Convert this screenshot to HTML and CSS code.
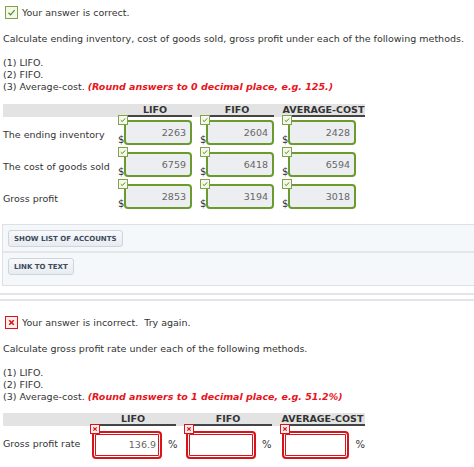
FILE: index.html
```html
<!DOCTYPE html>
<html lang="en">
<head>
    <meta charset="UTF-8">
    <title>Inventory methods</title>
    <link rel="stylesheet" href="styles.css">
</head>
<body>

    <!-- PARTE 1 -->
    <section class="question">
        <div class="result">
            <span class="mark mark-ok">
                <svg width="11" height="11" viewBox="0 0 11 11"><path d="M2.5 5.8 L4.6 7.8 L8.6 3.2" fill="none" stroke="#5c8a2a" stroke-width="1.2"/></svg>
            </span>
            Your answer is correct.
        </div>

        <p class="prompt">Calculate ending inventory, cost of goods sold, gross profit under each of the following methods.</p>

        <div class="methods">
            <div>(1) LIFO.</div>
            <div>(2) FIFO.</div>
            <div>(3) Average-cost. <em class="hint">(Round answers to 0 decimal place, e.g. 125.)</em></div>
        </div>

        <div class="grid grid-money">
            <div class="head-blank"></div>
            <div class="head">LIFO</div>
            <div class="head">FIFO</div>
            <div class="head head-last">AVERAGE-COST</div>

            <div class="label">The ending inventory</div>
            <div class="cell"><span class="tick"><svg width="8" height="8" viewBox="0 0 8 8"><path d="M1.8 4.2 L3.3 5.6 L6.2 2.4" fill="none" stroke="#5c8a2a" stroke-width="1"/></svg></span><span class="cur">$</span><span class="box ok">2263</span></div>
            <div class="cell"><span class="tick"><svg width="8" height="8" viewBox="0 0 8 8"><path d="M1.8 4.2 L3.3 5.6 L6.2 2.4" fill="none" stroke="#5c8a2a" stroke-width="1"/></svg></span><span class="cur">$</span><span class="box ok">2604</span></div>
            <div class="cell"><span class="tick"><svg width="8" height="8" viewBox="0 0 8 8"><path d="M1.8 4.2 L3.3 5.6 L6.2 2.4" fill="none" stroke="#5c8a2a" stroke-width="1"/></svg></span><span class="cur">$</span><span class="box ok">2428</span></div>

            <div class="label">The cost of goods sold</div>
            <div class="cell"><span class="tick"><svg width="8" height="8" viewBox="0 0 8 8"><path d="M1.8 4.2 L3.3 5.6 L6.2 2.4" fill="none" stroke="#5c8a2a" stroke-width="1"/></svg></span><span class="cur">$</span><span class="box ok">6759</span></div>
            <div class="cell"><span class="tick"><svg width="8" height="8" viewBox="0 0 8 8"><path d="M1.8 4.2 L3.3 5.6 L6.2 2.4" fill="none" stroke="#5c8a2a" stroke-width="1"/></svg></span><span class="cur">$</span><span class="box ok">6418</span></div>
            <div class="cell"><span class="tick"><svg width="8" height="8" viewBox="0 0 8 8"><path d="M1.8 4.2 L3.3 5.6 L6.2 2.4" fill="none" stroke="#5c8a2a" stroke-width="1"/></svg></span><span class="cur">$</span><span class="box ok">6594</span></div>

            <div class="label">Gross profit</div>
            <div class="cell"><span class="tick"><svg width="8" height="8" viewBox="0 0 8 8"><path d="M1.8 4.2 L3.3 5.6 L6.2 2.4" fill="none" stroke="#5c8a2a" stroke-width="1"/></svg></span><span class="cur">$</span><span class="box ok">2853</span></div>
            <div class="cell"><span class="tick"><svg width="8" height="8" viewBox="0 0 8 8"><path d="M1.8 4.2 L3.3 5.6 L6.2 2.4" fill="none" stroke="#5c8a2a" stroke-width="1"/></svg></span><span class="cur">$</span><span class="box ok">3194</span></div>
            <div class="cell"><span class="tick"><svg width="8" height="8" viewBox="0 0 8 8"><path d="M1.8 4.2 L3.3 5.6 L6.2 2.4" fill="none" stroke="#5c8a2a" stroke-width="1"/></svg></span><span class="cur">$</span><span class="box ok">3018</span></div>
        </div>
    </section>

    <!-- FERRAMENTAS -->
    <div class="tools">
        <div class="tools-row"><button class="tool-button">Show list of accounts</button></div>
        <div class="tools-row tools-row-last"><button class="tool-button">Link to text</button></div>
    </div>

    <div class="divider"></div>
    <div class="divider divider-2"></div>

    <!-- PARTE 2 -->
    <section class="question question-2">
        <div class="result">
            <span class="mark mark-bad">
                <svg width="11" height="11" viewBox="0 0 11 11"><path d="M3.2 3.2 L7.8 7.8 M7.8 3.2 L3.2 7.8" stroke="#d7141a" stroke-width="1.6"/></svg>
            </span>
            Your answer is incorrect.&nbsp; Try again.
        </div>

        <p class="prompt">Calculate gross profit rate under each of the following methods.</p>

        <div class="methods">
            <div>(1) LIFO.</div>
            <div>(2) FIFO.</div>
            <div>(3) Average-cost. <em class="hint">(Round answers to 1 decimal place, e.g. 51.2%)</em></div>
        </div>

        <div class="grid grid-rate">
            <div class="head-blank"></div>
            <div class="head">LIFO</div>
            <div class="head">FIFO</div>
            <div class="head head-last">AVERAGE-COST</div>

            <div class="label">Gross profit rate</div>
            <div class="cell"><span class="cross"><svg width="8" height="8" viewBox="0 0 8 8"><path d="M2.3 2.3 L5.7 5.7 M5.7 2.3 L2.3 5.7" stroke="#d7141a" stroke-width="1.2"/></svg></span><span class="box bad">136.9</span><span class="pct">%</span></div>
            <div class="cell"><span class="cross"><svg width="8" height="8" viewBox="0 0 8 8"><path d="M2.3 2.3 L5.7 5.7 M5.7 2.3 L2.3 5.7" stroke="#d7141a" stroke-width="1.2"/></svg></span><span class="box bad"></span><span class="pct">%</span></div>
            <div class="cell"><span class="cross"><svg width="8" height="8" viewBox="0 0 8 8"><path d="M2.3 2.3 L5.7 5.7 M5.7 2.3 L2.3 5.7" stroke="#d7141a" stroke-width="1.2"/></svg></span><span class="box bad"></span><span class="pct">%</span></div>
        </div>
    </section>

</body>
</html>
```

FILE: styles.css
```css
/* Base */
body, html {
    margin: 0;
    padding: 0;
    background-color: white;
    color: #333;
    font-family: 'DejaVu Sans', Verdana, sans-serif;
    font-size: 9.5px;
}

.question {
    padding: 5px 0 0 3px;
}

.question-2 {
    padding-top: 14px;
}

.result {
    display: flex;
    align-items: center;
    gap: 4px;
    height: 14px;
    padding-left: 2px;
}

.mark {
    display: flex;
    align-items: center;
    justify-content: center;
    width: 11px;
    height: 11px;
    border: 1px solid #7fa24a;
    background-color: #f3f8ea;
}

.mark-bad {
    border-color: #d7141a;
    background-color: #fdeeee;
}

.prompt {
    margin: 13px 0 0;
    line-height: 14px;
}

.methods {
    margin-top: 11px;
    line-height: 12px;
}

.hint {
    color: #e8141b;
    font-weight: 700;
}

/* Tabelas */
.grid {
    display: grid;
    margin-top: 11px;
    width: 362px;
}

.grid-money {
    grid-template-columns: 115px 82px 82px 83px;
    grid-auto-rows: 32px;
    grid-template-rows: 13px;
}

.grid-rate {
    grid-template-columns: 87px 94px 96px 85px;
    grid-template-rows: 13px;
    grid-auto-rows: 34px;
    margin-top: 10px;
}

.head-blank, .head {
    background-color: #e3e3e3;
}

.head {
    font-weight: 700;
    text-align: center;
    line-height: 11px;
    font-size: 9.5px;
    box-sizing: border-box;
    border-bottom: 2px solid #444;
    box-shadow: 8px 0 0 #e3e3e3;
    margin-right: 8px;
}

.head-last {
    margin-right: 0;
    box-shadow: none;
}

.label {
    display: flex;
    align-items: center;
    padding-top: 2px;
}

.grid-rate .label {
    padding-top: 0;
}

.cell {
    position: relative;
    display: flex;
    align-items: flex-start;
    padding-top: 3px;
}

.grid-rate .cell {
    align-items: center;
    padding-top: 3px;
    padding-left: 2px;
}

.cur {
    width: 6px;
    font-size: 10px;
    line-height: 10px;
    margin-top: 15px;
}

.tick, .cross {
    position: absolute;
    top: -2px;
    left: 0;
    width: 8px;
    height: 8px;
    border: 1px solid #7fa24a;
    background-color: #f3f8ea;
    display: flex;
}

.cross {
    border-color: #d7141a;
    background-color: #fdeeee;
}

.box {
    box-sizing: border-box;
    width: 68px;
    height: 25px;
    padding-right: 4px;
    text-align: right;
    line-height: 21px;
    color: #666;
    font-size: 9.5px;
    border-radius: 4px;
}

.box.ok {
    border: 2px solid #6b9a2f;
    background-color: #eceef1;
}

.box.bad {
    width: 70px;
    height: 28px;
    line-height: 24px;
    border: 2px solid #d7141a;
    box-shadow: inset 0 0 0 1px #fff, inset 0 0 0 2px #d7141a;
    background-color: white;
}

.pct {
    margin-left: 6px;
    font-size: 10px;
}

/* Ferramentas */
.tools {
    margin: 11px 0 0 2px;
    border: 1px solid #dde1e5;
    border-right: none;
    background-color: #f5f8fb;
}

.tools-row {
    padding: 5px 5px 4px;
    border-bottom: 2px solid #e3e6e9;
}

.tools-row-last {
    border-bottom: none;
    padding-bottom: 10px;
}

.tool-button {
    font-family: 'DejaVu Sans', Verdana, sans-serif;
    font-size: 7px;
    font-weight: 700;
    text-transform: uppercase;
    color: #3d4b5c;
    background: linear-gradient(#f7f9fb, #e8ecf0);
    border: 1px solid #cfd5dc;
    border-radius: 3px;
    padding: 0 5px;
    height: 17px;
}

.divider {
    margin-top: 7px;
    height: 2px;
    background-color: #e3e5e8;
}

.divider-2 {
    margin-top: 4px;
}
```
